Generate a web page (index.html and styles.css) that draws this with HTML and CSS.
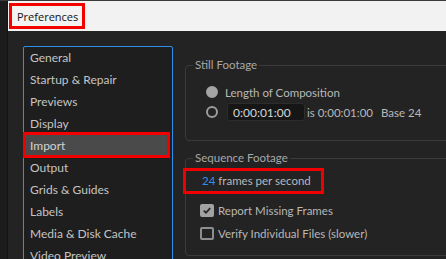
FILE: index.html
```html
<!DOCTYPE html>
<html lang="en">
<head>
  <meta charset="UTF-8">
  <meta name="viewport" content="width=device-width, initial-scale=1.0">
  <title>Preferences</title>
  <link rel="stylesheet" href="styles.css">
</head>
<body>
  <div class="screen">
    <div class="edge"></div>

    <div class="window">
      <div class="titlebar">
        <span class="title">Preferences</span>
      </div>

      <div class="prefs">
        <ul class="nav">
          <li>General</li>
          <li>Startup &amp; Repair</li>
          <li>Previews</li>
          <li>Display</li>
          <li class="active">Import</li>
          <li>Output</li>
          <li>Grids &amp; Guides</li>
          <li>Labels</li>
          <li>Media &amp; Disk Cache</li>
          <li>Video Preview</li>
          <li>Appearance</li>
        </ul>

        <div class="panel">
          <fieldset class="group group-still">
            <legend>Still Footage</legend>
            <div class="radio-row">
              <span class="radio checked"></span>
              <span>Length of Composition</span>
            </div>
            <div class="radio-row">
              <span class="radio"></span>
              <input class="timecode" type="text" value="0:00:01:00">
              <span class="note">is 0:00:01:00 <span class="base">Base 24</span></span>
            </div>
          </fieldset>

          <fieldset class="group group-sequence">
            <legend>Sequence Footage</legend>
            <div class="fps"><span class="fps-value">24</span> frames per second</div>
            <div class="check-row">
              <span class="check checked">
                <svg width="11" height="11" viewBox="0 0 11 11"><path d="M2 5.6 L4.4 8 L9 3" fill="none" stroke="#262626" stroke-width="2"/></svg>
              </span>
              <span>Report Missing Frames</span>
            </div>
            <div class="check-row">
              <span class="check"></span>
              <span>Verify Individual Files (slower)</span>
            </div>
          </fieldset>
        </div>
      </div>
    </div>
  </div>
</body>
</html>
```

FILE: styles.css
```css
* {
  box-sizing: border-box;
}
body {
  margin: 0;
  width: 446px;
  height: 259px;
  overflow: hidden;
  background-color: #232323;
  font-family: "Lato", sans-serif;
  font-size: 12px;
  color: #b8b8b8;
}
.screen {
  display: flex;
  height: 259px;
  border-top: 1px solid #3a3a3a;
}
.edge {
  width: 8px;
  flex-shrink: 0;
  background-color: #1c1c1c;
  border-right: 1px solid #141414;
}
.window {
  flex: 1;
  min-width: 0;
}
.titlebar {
  height: 30px;
  background-color: #f2f2f2;
  padding: 2px 0 0 1px;
}
.title {
  display: inline-flex;
  align-items: center;
  height: 26px;
  width: 76px;
  padding-left: 5px;
  border: 3px solid #f20000;
  font-family: "Open Sans", sans-serif;
  font-size: 11px;
  color: #111;
}
.prefs {
  display: flex;
  align-items: flex-start;
  padding: 15px 0 0 15px;
}
.nav {
  list-style: none;
  margin: 0;
  padding: 0;
  width: 150px;
  flex-shrink: 0;
  background-color: #1e1e1e;
  border: 1px solid #2f8ee8;
  border-radius: 2px;
}
.nav li {
  height: 22px;
  line-height: 22px;
  padding-left: 6px;
  color: #c4c4c4;
  white-space: nowrap;
}
.nav .active {
  position: relative;
  z-index: 0;
  color: #d2d2d2;
}
.nav .active::before {
  content: "";
  position: absolute;
  top: -3px;
  bottom: -1px;
  left: -1px;
  right: 2px;
  background-color: #4a4a4a;
  border: 3px solid #f20000;
  z-index: -1;
}
.panel {
  margin-left: 12px;
  padding-top: 11px;
  width: 320px;
  flex-shrink: 0;
  font-size: 11.5px;
}
.group {
  margin: 0;
  padding: 0 0 0 7px;
  min-width: 0;
  border: 1px solid #3b3b3b;
  border-radius: 4px;
}
.group legend {
  padding: 0 2px;
  line-height: 16px;
  color: #a8a8a8;
}
.group-still {
  padding-bottom: 18px;
}
.group-sequence {
  margin-top: 9px;
  padding-bottom: 10px;
}
.group-sequence legend {
  margin-top: 1px;
}
.radio-row {
  display: flex;
  align-items: center;
  height: 20px;
  margin-left: 13px;
}
.group-still .radio-row:first-of-type {
  margin-top: 9px;
}
.radio {
  width: 12px;
  height: 12px;
  margin-right: 7px;
  border-radius: 50%;
  border: 2px solid #9c9c9c;
  flex-shrink: 0;
}
.radio.checked {
  background-color: #a4a4a4;
  border-color: #a4a4a4;
}
.timecode {
  width: 78px;
  height: 18px;
  margin: 0 2px 0 2px;
  padding: 0 0 0 5px;
  background-color: #161616;
  border: 1px solid #2c2c2c;
  border-radius: 3px;
  outline: none;
  font-family: "Lato", sans-serif;
  font-size: 12px;
  color: #d6d6d6;
}
.base {
  margin-left: 5px;
}
.fps {
  margin: 2px 0 0 -10px;
  width: 141px;
  height: 26px;
  line-height: 20px;
  padding-left: 16px;
  border: 3px solid #f20000;
}
.fps-value {
  color: #2f8ee8;
}
.check-row {
  display: flex;
  align-items: center;
  height: 23px;
  margin-left: 7px;
}
.fps + .check-row {
  margin-top: 5px;
}
.check {
  display: flex;
  align-items: center;
  justify-content: center;
  width: 14px;
  height: 13px;
  margin-right: 4px;
  border: 2px solid #8e8e8e;
  border-radius: 2px;
  flex-shrink: 0;
}
.check.checked {
  background-color: #a2a2a2;
  border-color: #a2a2a2;
}
```
